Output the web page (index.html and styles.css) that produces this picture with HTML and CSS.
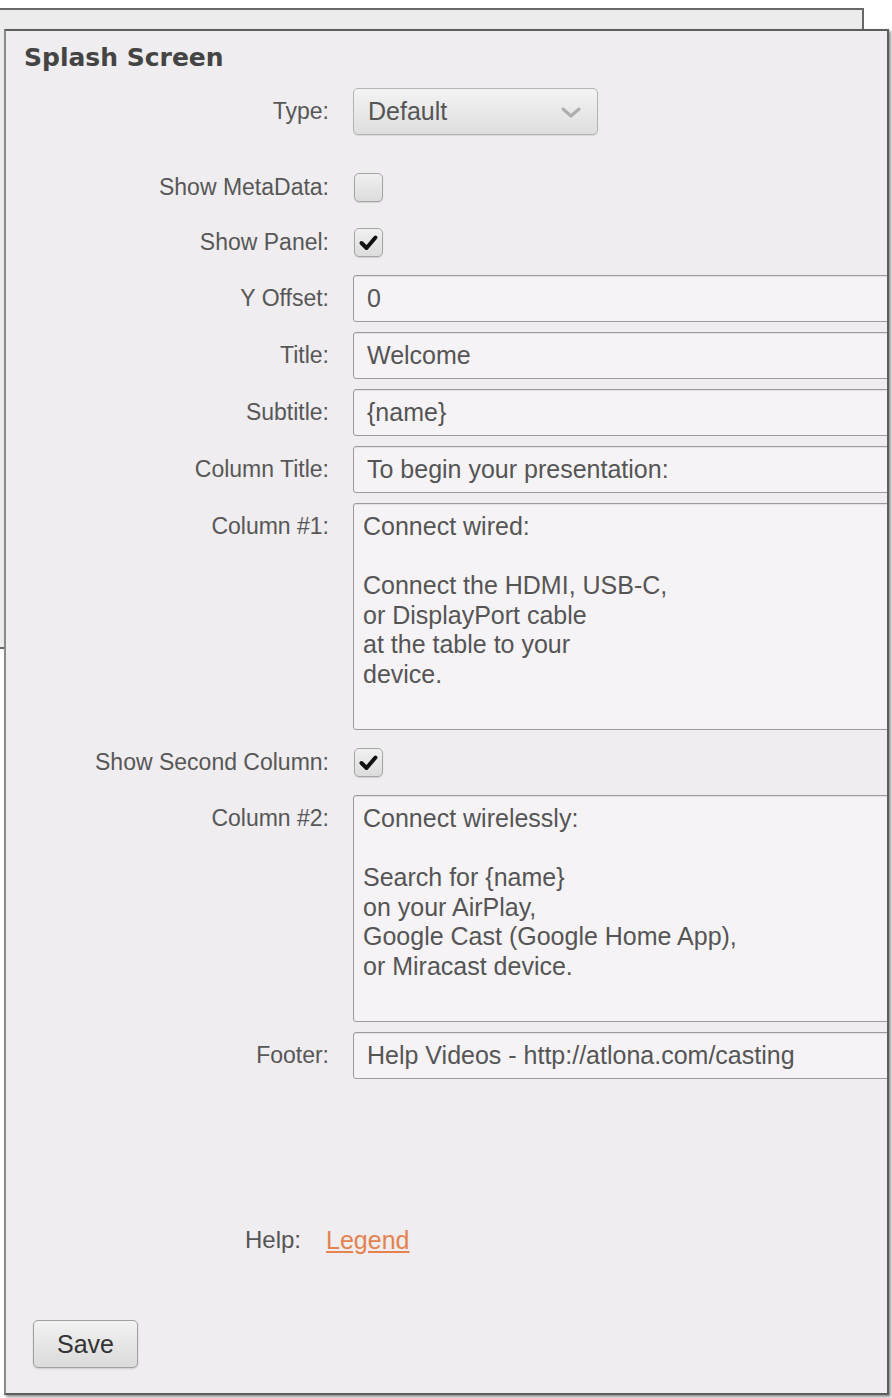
FILE: index.html
```html
<!DOCTYPE html>
<html lang="en">
<head>
    <meta charset="UTF-8">
    <meta name="viewport" content="width=device-width, initial-scale=1.0">
    <title>Splash Screen</title>
    <link rel="stylesheet" href="styles.css">
</head>
<body>
    <div class="desk">
        <div class="back-window"></div>

        <div class="panel">
            <h2 class="panel-title">Splash Screen</h2>

            <div class="form">
                <label class="lbl lbl-top">Type:</label>
                <div class="select-box type-field">
                    <span>Default</span>
                    <svg class="chevron" width="20" height="12" viewBox="0 0 20 12">
                        <path d="M2 2 L10 9 L18 2" fill="none" stroke="#adadad" stroke-width="3" stroke-linecap="round" stroke-linejoin="round"/>
                    </svg>
                </div>

                <label class="lbl">Show MetaData:</label>
                <div class="check-row"><span class="checkbox"></span></div>

                <label class="lbl">Show Panel:</label>
                <div class="check-row">
                    <span class="checkbox">
                        <svg width="29" height="29" viewBox="0 0 29 29"><path d="M7.5 15 L12.5 20 L21.5 9.5" fill="none" stroke="#111" stroke-width="4" stroke-linecap="round" stroke-linejoin="round"/></svg>
                    </span>
                </div>

                <label class="lbl">Y Offset:</label>
                <input class="text-input" type="text" value="0">

                <label class="lbl">Title:</label>
                <input class="text-input" type="text" value="Welcome">

                <label class="lbl">Subtitle:</label>
                <input class="text-input" type="text" value="{name}">

                <label class="lbl">Column Title:</label>
                <input class="text-input" type="text" value="To begin your presentation:">

                <label class="lbl lbl-top">Column #1:</label>
                <textarea class="text-area">Connect wired:

Connect the HDMI, USB-C,
or DisplayPort cable
at the table to your
device.</textarea>

                <label class="lbl">Show Second Column:</label>
                <div class="check-row">
                    <span class="checkbox">
                        <svg width="29" height="29" viewBox="0 0 29 29"><path d="M7.5 15 L12.5 20 L21.5 9.5" fill="none" stroke="#111" stroke-width="4" stroke-linecap="round" stroke-linejoin="round"/></svg>
                    </span>
                </div>

                <label class="lbl lbl-top">Column #2:</label>
                <textarea class="text-area">Connect wirelessly:

Search for {name}
on your AirPlay,
Google Cast (Google Home App),
or Miracast device.</textarea>

                <label class="lbl">Footer:</label>
                <input class="text-input" type="text" value="Help Videos - http://atlona.com/casting">
            </div>

            <div class="help-row">
                <span class="help-label">Help:</span>
                <a href="#" class="help-link">Legend</a>
            </div>

            <button class="save-btn">Save</button>
        </div>
    </div>
</body>
</html>
```

FILE: styles.css
```css
body {
    margin: 0;
    background-color: #ffffff;
    font-family: 'Liberation Sans', Arial, sans-serif;
    overflow: hidden;
}

.desk {
    position: relative;
    padding-top: 29px;
    padding-left: 4px;
    height: 1398px;
    box-sizing: border-box;
}

/* window left open behind the panel */
.back-window {
    position: absolute;
    top: 8px;
    left: -10px;
    width: 874px;
    height: 641px;
    box-sizing: border-box;
    border: 2px solid #686868;
    background-color: #ececec;
}

.panel {
    position: relative;
    width: 885px;
    height: 1366px;
    box-sizing: border-box;
    border: 2px solid #5e5e5e;
    border-left-color: #8a8a8a;
    background-color: #efedef;
    box-shadow: 2px 2px 3px rgba(0, 0, 0, 0.45);
    padding: 12px 0 0 18px;
    overflow: hidden;
}

.panel-title {
    margin: 0 0 15px 0;
    font-family: 'DejaVu Sans', Verdana, sans-serif;
    font-size: 25px;
    line-height: 30px;
    font-weight: bold;
    color: #444;
}

.form {
    display: grid;
    grid-template-columns: 305px 1fr;
    column-gap: 24px;
    row-gap: 10px;
}

.lbl {
    align-self: center;
    text-align: right;
    font-size: 23px;
    color: #575757;
    white-space: nowrap;
}

.lbl-top {
    align-self: start;
    line-height: 47px;
}

.select-box {
    display: flex;
    align-items: center;
    justify-content: space-between;
    width: 245px;
    height: 47px;
    box-sizing: border-box;
    padding: 0 16px 0 14px;
    border: 1px solid #b4b4b4;
    border-radius: 5px;
    background: linear-gradient(#f3f3f3, #dedede);
    box-shadow: 0 1px 1px rgba(0, 0, 0, 0.1);
    font-size: 25px;
    color: #555;
}

.type-field {
    margin-bottom: 20px;
}

.chevron {
    margin-top: 2px;
}

.check-row {
    display: flex;
    align-items: center;
    height: 45px;
}

.checkbox {
    display: block;
    width: 29px;
    height: 29px;
    box-sizing: border-box;
    margin-left: 1px;
    border: 1px solid #a5a5a5;
    border-radius: 5px;
    background: linear-gradient(#f1f0f1, #dcdcdc);
    box-shadow: 0 1px 1px rgba(0, 0, 0, 0.12);
}

.checkbox svg {
    display: block;
    margin: -1px 0 0 -1px;
}

.text-input,
.text-area {
    width: calc(100% + 12px);
    box-sizing: border-box;
    margin: 0;
    border: 1px solid #9c9a9c;
    border-radius: 3px;
    background-color: #f6f3f6;
    box-shadow: inset 0 1px 1px rgba(0, 0, 0, 0.08);
    font-family: 'Liberation Sans', Arial, sans-serif;
    font-size: 25px;
    color: #555;
    outline: none;
}

.text-input {
    height: 47px;
    padding: 0 13px;
}

.text-area {
    height: 227px;
    padding: 8px 9px;
    line-height: 29.5px;
    resize: none;
    overflow: hidden;
}

.help-row {
    display: flex;
    align-items: center;
    gap: 25px;
    margin-top: 146px;
    padding-left: 221px;
    line-height: 30px;
}

.help-label {
    font-size: 24px;
    color: #555;
}

.help-link {
    font-size: 25px;
    color: #e5824f;
    text-decoration: underline;
}

.save-btn {
    display: block;
    margin: 65px 0 0 9px;
    width: 105px;
    height: 48px;
    border: 1px solid #a0a0a0;
    border-radius: 5px;
    background: linear-gradient(#f2f2f2, #dadada);
    box-shadow: 0 1px 2px rgba(0, 0, 0, 0.15);
    font-family: 'Liberation Sans', Arial, sans-serif;
    font-size: 25px;
    color: #333;
    cursor: pointer;
}
```
